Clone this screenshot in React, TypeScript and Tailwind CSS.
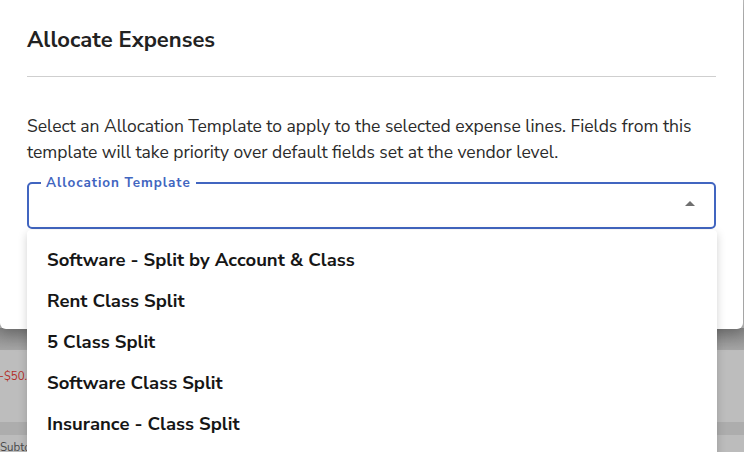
import React from 'react';

const templates = [
  'Software - Split by Account & Class',
  'Rent Class Split',
  '5 Class Split',
  'Software Class Split',
  'Insurance - Class Split',
];

const font = { fontFamily: '"Nunito Sans", "Open Sans", "Noto Sans", sans-serif' };

export default function App() {
  return (
    <div className="relative w-[744px] h-[452px] overflow-hidden bg-[#bcbcbc]" style={font}>
      {/* page behind the modal, dimmed by the backdrop */}
      <div className="flex flex-col pt-[328px]">
        <div className="h-[24px] bg-gradient-to-b from-[#8a8a8a] to-[#a6a6a6] border-b border-[#9c9c9c]" />
        <div className="h-[72px] bg-[#bdbdbd] flex items-start pt-[18px] -mt-[2px]">
          <span className="text-[11.5px] text-[#b3302a] leading-[16px] -ml-[1px]">-$50.86</span>
        </div>
        <div className="h-[13px] bg-[#adadad]" />
        <div className="h-[18px] bg-[#bcbcbc] flex items-end">
          <span className="text-[11.5px] text-[#4a4a4a] leading-none">Subtotal</span>
        </div>
      </div>

      {/* dialog */}
      <div className="absolute left-0 top-0 w-[743px] h-[329px] bg-white rounded-b-[6px] shadow-[0_6px_16px_rgba(0,0,0,0.25)] px-[27px]">
        <h2 className="pt-[27px] text-[22px] font-bold text-[#222] leading-[26px]">
          Allocate Expenses
        </h2>
        <div className="mt-[23px] border-t border-[#cfcfcf]" />
        <p className="mt-[36px] text-[17.5px] leading-[26px] text-[#2b2b2b]">
          Select an Allocation Template to apply to the selected expense lines. Fields from this
          template will take priority over default fields set at the vendor level.
        </p>
        <fieldset className="mt-[12px] h-[52px] border-2 border-[#4165c0] rounded-[5px] px-[8px] flex items-center justify-end">
          <legend className="ml-[4px] px-[5px] text-[13.5px] font-bold text-[#4165c0] tracking-[0.07em] leading-[12px]">
            Allocation Template
          </legend>
          <svg viewBox="0 0 24 24" className="w-[24px] h-[24px] -mt-[8px] mr-[4px]" fill="#6f6f6f">
            <path d="M7 14l5-5 5 5z" />
          </svg>
        </fieldset>
        <div className="mt-[30px] flex justify-end">
          <button className="h-[40px] w-[120px] rounded-[5px] border border-[#d4d4d4] mr-[-1px]" />
        </div>
      </div>

      {/* open select menu */}
      <ul className="absolute left-[27px] top-[230px] w-[690px] h-[240px] bg-white rounded-[4px] shadow-[0_3px_10px_rgba(0,0,0,0.18)] py-[10px]">
        {templates.map((t) => (
          <li key={t} className="h-[41px] px-[20px] flex items-center text-[18.5px] font-bold text-[#161616]">
            {t}
          </li>
        ))}
      </ul>
    </div>
  );
}
